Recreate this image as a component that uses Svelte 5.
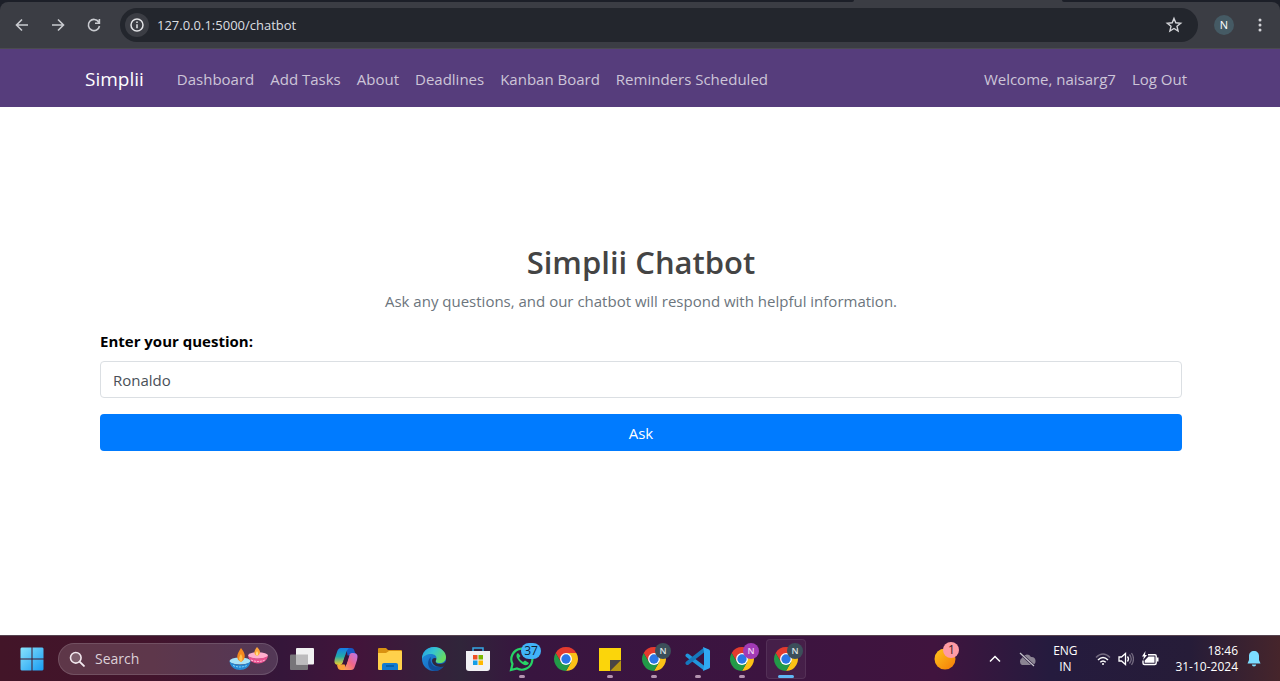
<script>
  let question = $state('Ronaldo');
  let address = $state('127.0.0.1:5000/chatbot');
  const links = ['Dashboard', 'Add Tasks', 'About', 'Deadlines', 'Kanban Board', 'Reminders Scheduled'];
  const apps = [
    { name: 'Task view', icon: 'tasks' },
    { name: 'Copilot', icon: 'copilot' },
    { name: 'File Explorer', icon: 'files' },
    { name: 'Edge', icon: 'edge' },
    { name: 'Store', icon: 'store' },
    { name: 'WhatsApp', icon: 'whatsapp', badge: '37', tone: 'count', running: true },
    { name: 'Chrome', icon: 'chrome' },
    { name: 'Sticky Notes', icon: 'notes', running: true },
    { name: 'Chrome, profile N', icon: 'chrome', badge: 'N', tone: 'slate', running: true },
    { name: 'Visual Studio Code', icon: 'code', running: true },
    { name: 'Chrome, second profile', icon: 'chrome', badge: 'N', tone: 'violet', running: true },
    { name: 'Chrome, current window', icon: 'chrome', badge: 'N', tone: 'slate', running: true, active: true }
  ];
</script>

<div class="screen">
  <header class="browser">
    <div class="tabs"><span class="tab-left"></span><span class="tab-active"></span><span class="tab-right"></span></div>
    <div class="toolbar">
      <button class="tool" aria-label="Back">
        <svg width="16" height="16" viewBox="0 0 16 16"><path d="M14 8H2.8M8 2.5 2.5 8 8 13.5" /></svg>
      </button>
      <button class="tool" aria-label="Forward">
        <svg width="16" height="16" viewBox="0 0 16 16"><path d="M2 8h11.2M8 2.5 13.5 8 8 13.5" /></svg>
      </button>
      <button class="tool" aria-label="Reload">
        <svg width="16" height="16" viewBox="0 0 16 16"><path d="M12.7 5A5.6 5.6 0 1 0 13.5 9M13.4 2v4.3H9" /></svg>
      </button>
      <div class="omnibox">
        <button class="info" aria-label="Site information">
          <svg width="16" height="16" viewBox="0 0 16 16"><circle cx="8" cy="8" r="6" /><path d="M8 7.2v4M8 4.5v1.5" /></svg>
        </button>
        <input aria-label="Address" bind:value={address} />
        <button class="star" aria-label="Bookmark this page">
          <svg width="18" height="18" viewBox="0 0 18 18"><path d="m9 2.4 1.8 4.4 4.9.4-3.7 3.1 1.1 4.7L9 12.5 4.9 15 6 10.3 2.3 7.2l4.9-.4z" /></svg>
        </button>
      </div>
      <button class="profile" aria-label="Profile">N</button>
      <button class="more" aria-label="Menu">
        <svg width="16" height="16" viewBox="0 0 16 16"><circle cx="8" cy="3" r="1.5" /><circle cx="8" cy="8" r="1.5" /><circle cx="8" cy="13" r="1.5" /></svg>
      </button>
    </div>
  </header>

  <nav class="site">
    <div class="container">
      <a class="brand" href="#home">Simplii</a>
      <div class="links">
        {#each links as link}<a href="#{link}">{link}</a>{/each}
      </div>
      <div class="links account">
        <span>Welcome, naisarg7</span>
        <a href="#logout">Log Out</a>
      </div>
    </div>
  </nav>

  <main>
    <form onsubmit={(e) => e.preventDefault()}>
      <h1>Simplii Chatbot</h1>
      <p>Ask any questions, and our chatbot will respond with helpful information.</p>
      <label for="question">Enter your question:</label>
      <input id="question" type="text" bind:value={question} />
      <button type="submit">Ask</button>
    </form>
  </main>

  <footer class="taskbar">
    <button class="start" aria-label="Start">
      <svg width="24" height="24" viewBox="0 0 24 24">
        <defs><linearGradient id="win" x1="0" y1="0" x2="24" y2="24" gradientUnits="userSpaceOnUse"><stop stop-color="#8be4fb" /><stop offset="1" stop-color="#169bf3" /></linearGradient></defs>
        <path fill="url(#win)" d="M1.500 0.500H11.500V11.500H.5V1.500zM12.500.5H22.500L23.500 1.500V11.500H12.500zM.5 12.500H11.500V23.500H1.500L.5 22.500zM12.500 12.500H23.500V22.500L22.500 23.500H12.500z" />
      </svg>
    </button>
    <div class="search">
      <svg width="16" height="16" viewBox="0 0 16 16"><circle cx="6.800" cy="6.800" r="5.300" fill="#ffffff33" stroke="#f2e8ee" stroke-width="1.600" /><path d="m10.800 10.800 4.100 4.100" stroke="#f2e8ee" stroke-width="1.900" stroke-linecap="round" /></svg>
      <input aria-label="Search" placeholder="Search" />
      <svg width="40" height="26" viewBox="0 0 40 26">
        <ellipse cx="29" cy="9.500" rx="10" ry="3.300" fill="#ffb0cf" /><path d="M19 9.500c1 10.500 19 10.500 20 0-3 4-17 4-20 0z" fill="#e8518f" /><path d="M22 14q7 3 14 0" stroke="#ffc4dd" stroke-dasharray="2 1" fill="none" />
        <path d="M28 1c4 4 4 7 0 9-4-2-3-5 0-9z" fill="#ffa63c" /><path d="M28 5c1.500 2 1.500 4 0 5-1.500-1-1.500-3 0-5z" fill="#ffe08a" />
        <ellipse cx="11" cy="15" rx="10.500" ry="3.600" fill="#a7e3f7" /><path d="M.5 15c1 12 20 12 21 0-3 5-18 5-21 0z" fill="#2489d4" /><path d="M4 19.500q7 3 14 0" stroke="#8fddff" stroke-dasharray="2 1" fill="none" />
        <path d="M12 2c5 6 5 11 0 14-6-3-4-8 0-14z" fill="#f58a1e" /><path d="M12 8c2 3 2 6 0 8-3-2-2-5 0-8z" fill="#ffc14a" />
      </svg>
    </div>
    <div class="apps">
      {#each apps as app}
        <button class="app" class:active={app.active} aria-label={app.name}>
          {#if app.icon === 'tasks'}
            <svg width="26" height="26" viewBox="0 0 26 26"><rect x="1" y="8.500" width="18" height="15.500" rx="1" fill="#777579" /><rect x="7" y="2" width="18" height="16.500" rx="1" fill="#f1f1f2" /><path d="M7 8.500h12v10H7z" fill="#bcbbbd" /></svg>
          {:else if app.icon === 'copilot'}
            <svg width="26" height="26" viewBox="0 0 26 26">
              <defs><linearGradient id="copA" x1="0" y1="0" x2="0" y2="1"><stop stop-color="#167ce8" /><stop offset=".5" stop-color="#23aaa8" /><stop offset="1" stop-color="#f5ce27" /></linearGradient><linearGradient id="copB" x1="1" y1="0" x2="0" y2="1"><stop stop-color="#b776f3" /><stop offset=".5" stop-color="#f06689" /><stop offset="1" stop-color="#ffac4d" /></linearGradient></defs>
              <path d="M13 2h5c2 0 3 1 3.500 3l1 3h-4l-3 6z" fill="#1657c4" />
              <path d="M8 2h9c-2 0-3 2-4 5l-3 9c-1 3-2 3-4 3-5 0-5-3-4-7l2-6c1-3 2-4 4-4z" fill="url(#copA)" />
              <path d="M13 24H8c-2 0-3-1-3.500-3L4 19h3c2 0 3-1 4-4z" fill="#fba13b" />
              <path d="M18 24H9c2 0 3-2 4-5l3-9c1-3 2-3 4-3 5 0 5 3 4 7l-2 6c-1 3-2 4-4 4z" fill="url(#copB)" />
              <path d="m12.300 9.500-2 6q-.5 1.800-1.300 2.800 2 .2 4.500.2l2.200-7q.4-1.400 1-2z" fill="#38153a" />
            </svg>
          {:else if app.icon === 'files'}
            <svg width="26" height="26" viewBox="0 0 26 26"><path d="M1 3q0-1 1-1h7l2 2h13q1 0 1 1v4H1z" fill="#d99211" /><path d="M1 7h8l3-2h12q1 0 1 1v17q0 1-1 1H2q-1 0-1-1z" fill="#ffd14b" /><path d="M5 24v-5q0-2 2-2h12q2 0 2 2v5z" fill="#147bd0" /><path d="M9 20h8" stroke="#07579c" stroke-width="1.500" /></svg>
          {:else if app.icon === 'edge'}
            <svg width="26" height="26" viewBox="0 0 26 26">
              <defs><linearGradient id="edgeA" x1="0" y1="0" x2="1" y2=".5"><stop stop-color="#239be8" /><stop offset=".5" stop-color="#36c5d0" /><stop offset="1" stop-color="#67dc62" /></linearGradient><linearGradient id="edgeB" x1="0" y1="0" x2="1" y2="1"><stop stop-color="#1e93df" /><stop offset="1" stop-color="#1559b5" /></linearGradient></defs>
              <circle cx="13" cy="13" r="12" fill="url(#edgeB)" />
              <path d="M1 13C1 6 6 1 13 1c7 0 12 5 12 10 0 4-3 6-6 6-4 0-5-1-4-3 2-4-2-6-5-6-4 0-8 2-9 5z" fill="url(#edgeA)" />
              <path d="M10 11c-2 5 2 11 9 10 2 0 3-1 4-2-3 6-8 7-12 5-5-3-5-10-1-13z" fill="#124d98" />
              <path d="M15 14c-1 2 0 4 4 4 2.500 0 5-1.200 6-3l1 2-2 3c-4 2-12 1-13-5 0-2 1-3 3-3q2 0 1 2z" fill="#30283d" />
            </svg>
          {:else if app.icon === 'store'}
            <svg width="26" height="26" viewBox="0 0 26 26"><path d="M8 6V2h10v4" fill="none" stroke="#35a7e5" stroke-width="1.500" /><path d="M1 5h24v17q0 3-3 3H4q-3 0-3-3z" fill="#f1f1f4" /><path d="M8 9h4.500v4.500H8z" fill="#ef5024" /><path d="M13.500 9H18v4.500h-4.500z" fill="#7ab800" /><path d="M8 14.500h4.500V19H8z" fill="#159fe7" /><path d="M13.500 14.500H18V19h-4.500z" fill="#ffb800" /></svg>
          {:else if app.icon === 'whatsapp'}
            <svg width="26" height="26" viewBox="0 0 26 26"><path d="m2 24 1.500-6A10.500 10.500 0 1 1 8 22.500z" fill="none" stroke="#27d366" stroke-width="2.200" /><path d="M9 7c-3 2-1 6 2 9s7 5 9 1l-4-2.500-2 1.500q-3-2-4-4l1.500-2z" fill="#27d366" /></svg>
          {:else if app.icon === 'chrome'}
            <svg width="26" height="26" viewBox="0 0 24 24"><path d="M2.470 6.500A11 11 0 0 1 21.530 6.500H12L7.240 14.750z" fill="#e33b2e" /><path d="M21.530 6.500A11 11 0 0 1 12 23l4.760-8.250L12 6.500z" fill="#fbc116" /><path d="M12 23A11 11 0 0 1 2.470 6.500l4.770 8.250h9.520z" fill="#229a48" /><circle cx="12" cy="12" r="5.500" fill="#fff" /><circle cx="12" cy="12" r="4.300" fill="#2b76e5" /></svg>
          {:else if app.icon === 'notes'}
            <svg width="26" height="26" viewBox="0 0 26 26"><path d="M2 2h22v12H13v11H2z" fill="#fbd50b" /><path d="M13 14h11L13 25z" fill="#484545" /><path d="M24 14v11H13z" fill="#b69813" /></svg>
          {:else}
            <svg width="26" height="26" viewBox="0 0 26 26"><path d="M2.500 9.500 19 22" stroke="#2196dc" stroke-width="4" stroke-linecap="round" /><path d="M2.500 17 19 4" stroke="#1578bd" stroke-width="4" stroke-linecap="round" /><path d="m18 1 6 2.500q1 .5 1 1.500v16q0 1-1 1.500L18 25l1-5V6z" fill="#30a9f2" /></svg>
          {/if}
          {#if app.badge}<span class="badge {app.tone}">{app.badge}</span>{/if}
          {#if app.running}<span class="dot"></span>{/if}
        </button>
      {/each}
    </div>
    <div class="tray">
      <button class="app weather" aria-label="Widgets">
        <svg width="22" height="22" viewBox="0 0 22 22"><defs><linearGradient id="orb" x1="0" y1="0" x2="1" y2="1"><stop stop-color="#ffc51c" /><stop offset="1" stop-color="#f47b08" /></linearGradient></defs><circle cx="11" cy="11" r="10.500" fill="url(#orb)" /></svg>
        <span class="badge alert">1</span>
      </button>
      <button class="chevron" aria-label="Show hidden icons"><svg width="14" height="14" viewBox="0 0 14 14"><path d="m2 9.500 5-5 5 5" fill="none" stroke="#fff" stroke-width="1.500" /></svg></button>
      <button class="cloud" aria-label="OneDrive"><svg width="18" height="16" viewBox="0 0 18 16"><path d="M4 14a4 4 0 0 1 0-7 5 5 0 0 1 9-1 4 4 0 0 1 1 8z" fill="#8b8493" /><path d="m2 2 14 13" stroke="#2a1d3c" stroke-width="2.400" /><path d="m2 2 14 13" stroke="#c9c4cf" stroke-width="1.200" /></svg></button>
      <button class="lang"><span>ENG</span><span>IN</span></button>
      <button class="status" aria-label="Network, volume and battery">
        <svg width="16" height="16" viewBox="0 0 16 16" fill="none" stroke="#fff" stroke-width="1.500"><path d="M1 6.500q7-7 14 0" stroke="#746b80" /><path d="M3 9q5-5 10 0M5.300 11.300q2.700-2.700 5.400 0" /><circle cx="8" cy="13" r="1" fill="#fff" stroke="none" /></svg>
        <svg width="16" height="16" viewBox="0 0 16 16" fill="none" stroke="#fff" stroke-width="1.300"><path d="M1 6h2.500L7.500 2.500v11L3.500 10H1zM9.500 5.500q2 2.500 0 5" /><path d="M11.500 3.500q3.500 4.500 0 9M13.500 2q4 6 0 12" stroke="#746b80" /></svg>
        <svg width="18" height="16" viewBox="0 0 18 16"><path d="M7 3.800h7q1.200 0 1.200 1.200v7q0 1.500-1.500 1.500H3.500Q2 13.500 2 12V9.500" fill="none" stroke="#fff" stroke-width="1.400" /><path d="M16 6.500h1.500v4H16zM7.500 5.500h6v6.300h-9.800V9.500z" fill="#fff" /><path d="M4.500 0 1 5.500h2L2 9l4-5H4z" fill="#fff" /></svg>
      </button>
      <button class="clock"><span>18:46</span><span>31-10-2024</span></button>
      <button class="bell" aria-label="Notifications"><svg width="16" height="18" viewBox="0 0 16 18"><path d="M8 1c3 0 5 2 5 5v4l1.500 3.500h-13L3 10V6c0-3 2-5 5-5zM5.800 14.500h4.400Q10 16.500 8 16.500t-2.200-2z" fill="#7cdcff" /></svg></button>
    </div>
  </footer>
</div>

<style>
  :global(body) { margin: 0; }
  .screen { min-height: 100vh; display: flex; flex-direction: column; background: #fff; font-family: "Open Sans", "Noto Sans", sans-serif; font-size: 15px; line-height: 24px; }
  button, input { font: inherit; margin: 0; padding: 0; border: 0; background: none; box-sizing: border-box; }
  button { display: flex; align-items: center; justify-content: center; cursor: pointer; }
  input { min-width: 0; outline: 0; }
  a { text-decoration: none; color: inherit; }
  svg { display: block; flex-shrink: 0; }

  .browser { background: #1c1f28; }
  .tabs { height: 2px; display: flex; background: #3b3d44; }
  .tab-left { flex: 854; background: #1c1f28; border-bottom-right-radius: 2px; }
  .tab-active { flex: 208; }
  .tab-right { flex: 218; background: #1c1f28; border-bottom-left-radius: 2px; }
  .toolbar { display: flex; align-items: center; height: 47px; padding: 0 8px 0 4px; box-sizing: border-box; background: #3b3d44; border-radius: 8px 8px 0 0; border-bottom: 1px solid #4b4b50; }
  .tool { width: 36px; height: 34px; }
  .tool path { fill: none; stroke: #c9cbd0; stroke-width: 1.6; }
  .omnibox { flex: 1; display: flex; align-items: center; height: 34px; margin-left: 8px; padding: 0 12px 0 5px; border-radius: 17px; background: #23262d; gap: 8px; }
  .info { width: 24px; height: 24px; border-radius: 50%; background: #3b3d44; }
  .info svg { fill: none; stroke: #e2e3e6; stroke-width: 1.5; }
  .omnibox input { flex: 1; color: #dcdee1; font-size: 13px; }
  .star { width: 24px; height: 24px; }
  .star svg { fill: none; stroke: #d3d4d8; stroke-width: 1.4; }
  .profile { width: 20px; height: 20px; margin: 0 14px 0 16px; border-radius: 50%; background: #455a64; color: #fff; font-size: 11px; line-height: 16px; }
  .more { width: 24px; height: 24px; }
  .more svg { fill: #d3d4d8; }

  .site { background: #563d7c; color: #cdc5d8; }
  .container { max-width: 1110px; min-height: 58px; margin: 0 auto; padding: 0 16px; display: flex; align-items: center; }
  .brand { color: #fff; font-size: 19px; margin-right: 25px; padding-top: 2px; }
  .links { display: flex; padding-top: 2px; }
  .links > * { padding: 0 8px; white-space: nowrap; }
  .account { margin-left: auto; }

  main { flex: 1; padding: 136px 16px 32px 18px; }
  form { max-width: 1082px; margin: 0 auto; display: flex; flex-direction: column; }
  h1 { margin: 0 0 8px; font-size: 31px; line-height: 38px; font-weight: 600; color: #444; text-align: center; }
  p { margin: 0 0 16px; text-align: center; color: #6c757d; }
  label { margin-bottom: 8px; font-weight: 700; color: #000; }
  form input { height: 37px; padding: 0 12px; border: 1px solid #dbdfe3; border-radius: 4px; color: #495057; margin-bottom: 16px; }
  form button { height: 37px; border-radius: 4px; background: #007bff; color: #fff; }

  .taskbar { display: flex; align-items: center; height: 46px; padding: 0 18px 0 16px; box-sizing: border-box; border-top: 1px solid #56434f; color: #fff; background: linear-gradient(90deg, #421528 0%, #42142c 12%, #35163a 22%, #42143a 28%, #30253a 36%, #38153f 41%, #3c1440 60%, #40143e 73%, #251b3e 82%, #261c38 93%, #46252b 100%); }
  .start { width: 32px; height: 32px; margin-right: 10px; }
  .search { display: flex; align-items: center; width: 220px; height: 32px; padding: 0 8px 0 10px; gap: 10px; box-sizing: border-box; border-radius: 16px; background: #ffffff26; border: 1px solid #ffffff22; }
  .search input { flex: 1; color: #eee; font-size: 14px; }
  .search input::placeholder { color: #dcd0d8; opacity: 1; }
  .search svg { fill: none; }
  .apps { display: flex; gap: 4px; margin-left: 4px; }
  .app { position: relative; width: 40px; height: 40px; border-radius: 4px; }
  .active { background: #ffffff0c; box-shadow: inset 0 0 0 1px #ffffff14; }
  .badge { position: absolute; top: 4px; right: 3px; width: 16px; height: 16px; border-radius: 8px; font-size: 9px; line-height: 16px; font-weight: 600; color: #dde3e6; text-align: center; }
  .count { width: 20px; right: 1px; background: #41b3f8; color: #10233a; font-size: 12px; font-weight: 400; }
  .slate { background: #3c4f5a; }
  .violet { background: #a23bb5; color: #f2d6f6; }
  .alert { background: #ff9ba4; color: #3a1a22; font-size: 12px; font-weight: 400; top: 3px; right: 6px; }
  .dot { position: absolute; bottom: 1px; left: 17px; width: 6px; height: 3px; border-radius: 2px; background: #b493b0; }
  .active .dot { left: 12px; width: 16px; background: #5fb7f5; }
  .tray { display: flex; align-items: center; margin-left: auto; font-size: 12px; line-height: 16px; }
  .tray button { color: inherit; }
  .chevron { width: 24px; height: 32px; margin-left: 18px; }
  .cloud { width: 24px; height: 32px; margin: 0 12px 0 8px; }
  .lang { flex-direction: column; width: 28px; }
  .status { gap: 7px; margin: 0 16px; }
  .clock { flex-direction: column; align-items: flex-end; }
  .bell { margin-left: 8px; }
</style>
